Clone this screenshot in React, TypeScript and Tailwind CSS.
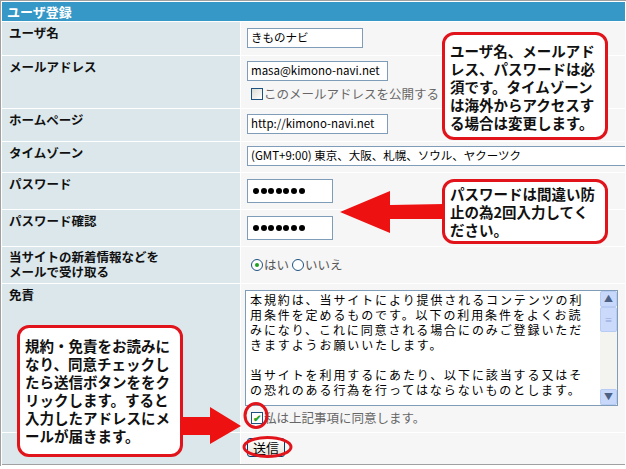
import React from "react";

const font = { fontFamily: '"Noto Sans CJK JP", "Noto Sans", sans-serif' };

function Row({ label, height, children }: { label: React.ReactNode; height: string; children?: React.ReactNode }) {
  return (
    <div className={`flex gap-[1px] ${height}`}>
      <div className="w-[238px] shrink-0 bg-[#dbe7eb] pl-[7px] pt-[3px] text-[12.5px] font-bold leading-[15px] text-[#111]">
        {label}
      </div>
      <div className="min-w-0 flex-1 overflow-hidden bg-[#f6f6f6] pl-[6px]">{children}</div>
    </div>
  );
}

function Field({ value, width }: { value: string; width: string }) {
  return (
    <div
      className={`flex h-[20px] items-center overflow-hidden whitespace-nowrap border border-[#7f9db9] bg-white px-[3px] text-[11.5px] text-black ${width}`}
    >
      {value}
    </div>
  );
}

function Dots() {
  return (
    <div className="flex h-[24px] w-[86px] items-center gap-[1.6px] border border-[#7f9db9] bg-white pl-[5px]">
      {[0, 1, 2, 3, 4, 5, 6].map((i) => (
        <span key={i} className="h-[6px] w-[6px] rounded-full bg-black" />
      ))}
    </div>
  );
}

function Callout({ className, lines }: { className: string; lines: string[] }) {
  return (
    <div
      className={`absolute rounded-[12px] border-[3px] border-[#e1141c] bg-white pl-[5px] text-[14.5px] font-bold leading-[18px] text-[#111] ${className}`}
    >
      {lines.map((l) => (
        <div key={l} className="whitespace-nowrap">
          {l}
        </div>
      ))}
    </div>
  );
}

export default function App() {
  return (
    <div className="relative h-[469px] w-[626px] overflow-hidden bg-white" style={font}>
      <div className="border-l border-t border-[#a0a0a0] p-[1px]">
        <div className="flex flex-col gap-[1px] bg-white">
          <div className="h-[19px] bg-[#3598c6] pl-[5px] text-[13px] font-bold leading-[19px] text-white">ユーザ登録</div>

          <Row label="ユーザ名" height="h-[33px]">
            <div className="pt-[6px]">
              <Field value="きものナビ" width="w-[116px]" />
            </div>
          </Row>

          <Row label="メールアドレス" height="h-[52px]">
            <div className="pt-[5px]">
              <Field value="masa@kimono-navi.net" width="w-[141px]" />
              <div className="mt-[5px] flex items-center gap-[1px] whitespace-nowrap pl-[4px] text-[12.5px] leading-[15px] text-[#666]">
                <span className="h-[12px] w-[12px] border border-[#1c5180] bg-gradient-to-br from-[#dcdcd6] to-white" />
                このメールアドレスを公開する
              </div>
            </div>
          </Row>

          <Row label="ホームページ" height="h-[32px]">
            <div className="pt-[5px]">
              <Field value="http://kimono-navi.net" width="w-[141px]" />
            </div>
          </Row>

          <Row label="タイムゾーン" height="h-[30px]">
            <div className="pt-[4px]">
              <Field value="(GMT+9:00) 東京、大阪、札幌、ソウル、ヤクーツク" width="w-[420px]" />
            </div>
          </Row>

          <Row label="パスワード" height="h-[36px]">
            <div className="pt-[6px]">
              <Dots />
            </div>
          </Row>

          <Row label="パスワード確認" height="h-[36px]">
            <div className="pt-[6px]">
              <Dots />
            </div>
          </Row>

          <Row
            label={
              <div className="-mt-[1px] leading-[15px]">
                <div>当サイトの新着情報などを</div>
                <div>メールで受け取る</div>
              </div>
            }
            height="h-[36px]"
          >
            <div className="flex items-center whitespace-nowrap pl-[4px] pt-[10px] text-[12.5px] leading-[15px] text-[#555]">
              <span className="mr-[1px] flex h-[12px] w-[12px] items-center justify-center rounded-full border border-[#1c5180] bg-white">
                <span className="h-[4px] w-[4px] rounded-full bg-[#21a121]" />
              </span>
              はい
              <span className="ml-[3px] mr-[1px] h-[12px] w-[12px] rounded-full border border-[#1c5180] bg-white" />
              いいえ
            </div>
          </Row>

          <Row label="免責" height="h-[148px]">
            <div className="pt-[6px]">
              <div className="-ml-[2px] flex h-[116px] w-[373px] border border-[#7f9db9] bg-white">
                <div className="flex-1 pl-[4px] pt-[1px] text-[12px] leading-[15px] tracking-[1.9px] text-black">
                  <div className="whitespace-nowrap">本規約は、当サイトにより提供されるコンテンツの利</div>
                  <div className="whitespace-nowrap">用条件を定めるものです。以下の利用条件をよくお読</div>
                  <div className="whitespace-nowrap">みになり、これに同意される場合にのみご登録いただ</div>
                  <div className="whitespace-nowrap">きますようお願いいたします。</div>
                  <div className="h-[15px]" />
                  <div className="whitespace-nowrap">当サイトを利用するにあたり、以下に該当する又はそ</div>
                  <div className="whitespace-nowrap">の恐れのある行為を行ってはならないものとします。</div>
                </div>
                <div className="flex w-[17px] flex-col bg-[#f3f3ef]">
                  <div className="flex h-[16px] items-center justify-center rounded-[2px] border border-[#b7cbf5] bg-[#c8d8fa] text-[9px] text-[#4d6185]">▲</div>
                  <div className="flex h-[25px] items-center justify-center rounded-[2px] border border-[#b7cbf5] bg-[#cbdafb] text-[8px] text-[#8ea4d6]">≡</div>
                  <div className="flex-1" />
                  <div className="flex h-[16px] items-center justify-center rounded-[2px] border border-[#b7cbf5] bg-[#c8d8fa] text-[9px] text-[#4d6185]">▼</div>
                </div>
              </div>
              <div className="mt-[4px] flex items-center gap-[1px] whitespace-nowrap pl-[4px] text-[12.5px] leading-[15px] text-[#666]">
                <span className="flex h-[12px] w-[12px] items-center justify-center border border-[#1c5180] bg-white text-[10px] font-bold leading-none text-[#21a121]">
                  ✔
                </span>
                私は上記事項に同意します。
              </div>
            </div>
          </Row>

          <Row label="" height="h-[31px]">
            <div className="pt-[5px]">
              <div className="flex h-[19px] w-[38px] items-center justify-center rounded-[3px] border border-[#003c74] bg-gradient-to-b from-white to-[#e4e2d8] text-[13px] leading-none text-black">
                送信
              </div>
            </div>
          </Row>
        </div>
        <div className="h-[1px] bg-[#a0a0a0]" />
      </div>

      <Callout
        className="left-[442px] top-[32px] h-[108px] w-[166px] pt-[7px]"
        lines={["ユーザ名、メールアド", "レス、パスワードは必", "須です。タイムゾーン", "は海外からアクセスす", "る場合は変更します。"]}
      />
      <Callout
        className="left-[442px] top-[179px] h-[65px] w-[166px] pt-[3px]"
        lines={["パスワードは間違い防", "止の為2回入力してく", "ださい。"]}
      />
      <Callout
        className="left-[17px] top-[325px] h-[132px] w-[166px] pt-[9px] leading-[18.5px]"
        lines={["規約・免責をお読みに", "なり、同意チェックし", "たら送信ボタンををク", "リックします。すると", "入力したアドレスにメ", "ールが届きます。"]}
      />

      <svg className="absolute left-0 top-0" width="626" height="469" viewBox="0 0 626 469">
        <polygon points="340,212 390,191 390,205 444,204 444,219 390,219 390,233" fill="#ee1111" />
        <polygon points="181,417 210,417 210,407 241,426 210,444 210,435 181,435" fill="#ee1111" />
        <ellipse cx="256" cy="415.5" rx="11" ry="12" fill="none" stroke="#e1141c" strokeWidth="3" />
        <ellipse cx="267.5" cy="447" rx="23.5" ry="9.5" fill="none" stroke="#e1141c" strokeWidth="3" />
      </svg>
    </div>
  );
}
